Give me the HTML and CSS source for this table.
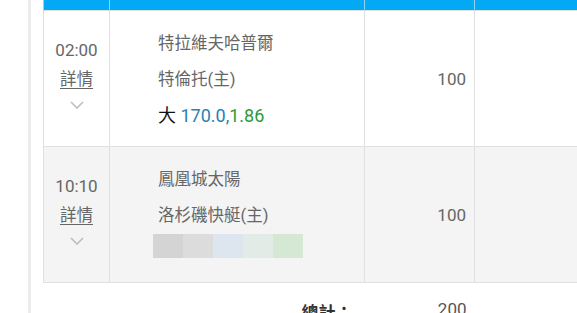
FILE: index.html
```html
<!DOCTYPE html>
<html lang="zh-Hant">
<head>
<meta charset="utf-8">
<title>注單</title>
<link rel="stylesheet" href="styles.css">
</head>
<body>
<div class="page">
  <div class="rail"></div>
  <table class="bets">
    <colgroup>
      <col class="w-time"><col class="w-match"><col class="w-amt"><col class="w-extra">
    </colgroup>
    <thead>
      <tr><th></th><th></th><th></th><th></th></tr>
    </thead>
    <tbody>
      <tr class="row">
        <td class="time">
          <div class="clock">02:00</div>
          <a class="detail" href="#">詳情</a>
          <svg class="chev" width="14" height="8" viewBox="0 0 14 8"><path d="M1 1 L7 7 L13 1" fill="none" stroke="#bdbdbd" stroke-width="1.6"/></svg>
        </td>
        <td class="match">
          <div class="line">特拉維夫哈普爾</div>
          <div class="line">特倫托(主)</div>
          <div class="line pick"><span class="dir">大</span> <span class="hdp">170.0,</span><span class="odds">1.86</span></div>
        </td>
        <td class="amt">100</td>
        <td></td>
      </tr>
      <tr class="row alt">
        <td class="time">
          <div class="clock">10:10</div>
          <a class="detail" href="#">詳情</a>
          <svg class="chev" width="14" height="8" viewBox="0 0 14 8"><path d="M1 1 L7 7 L13 1" fill="none" stroke="#bdbdbd" stroke-width="1.6"/></svg>
        </td>
        <td class="match">
          <div class="line">鳳凰城太陽</div>
          <div class="line">洛杉磯快艇(主)</div>
          <div class="line"><span class="blur"><span class="b1"></span><span class="b2"></span><span class="b3"></span><span class="b4"></span><span class="b5"></span></span></div>
        </td>
        <td class="amt">100</td>
        <td></td>
      </tr>
      <tr class="total">
        <td></td>
        <td class="label">總計：</td>
        <td class="sum">200</td>
        <td></td>
      </tr>
    </tbody>
  </table>
</div>
</body>
</html>
```

FILE: styles.css
```css
html, body {
  margin: 0;
  padding: 0;
  background: #fff;
  overflow: hidden;
}
body {
  font-family: Roboto, "Noto Sans CJK TC", sans-serif;
  font-size: 16.5px;
  color: #666;
}
.page {
  display: flex;
  padding-left: 28px;
}
.rail {
  flex: none;
  width: 3px;
  height: 313px;
  background: #ececec;
  margin-right: 12px;
}
.bets {
  flex: none;
  border-collapse: collapse;
  table-layout: fixed;
  width: 560px;
}
.w-time { width: 66px; }
.w-match { width: 255px; }
.w-amt { width: 110px; }
.w-extra { width: 129px; }
.bets th {
  height: 10px;
  padding: 0;
  background: #03a9f4;
  border-left: 1px solid #8fd4f8;
  border-right: 1px solid #8fd4f8;
}
.bets td {
  border: 1px solid #e0e0e0;
  padding: 0;
}
.alt td { background: #f4f4f4; }
.time {
  vertical-align: top;
  text-align: center;
  padding-top: 24px !important;
}
.clock {
  line-height: 30px;
  font-size: 17px;
}
.detail {
  display: block;
  line-height: 30px;
  color: #666;
  text-decoration: underline;
  text-underline-offset: 3px;
}
.chev {
  display: block;
  margin: 6px auto 0;
}
.match {
  vertical-align: top;
  padding: 15px 0 12px 48px !important;
}
.line {
  line-height: 36px;
  height: 36px;
  white-space: nowrap;
}
.pick { font-size: 18px; }
.dir { color: #111; }
.hdp { color: #2a80b0; }
.odds { color: #2e9a36; }
.blur {
  display: inline-flex;
  vertical-align: top;
  margin-left: -5px;
  height: 24px;
}
.blur span { width: 30px; height: 24px; }
.b1 { background: #d4d4d4; }
.b2 { background: #dcdcdc; }
.b3 { background: #dde5ee; }
.b4 { background: #e3ebe7; }
.b5 { background: #d5e8d3; }
.amt {
  font-size: 17px;
  text-align: right;
  vertical-align: middle;
  padding-right: 8px !important;
}
.total td {
  border-left: none;
  border-right: none;
  height: 40px;
  vertical-align: top;
  padding-top: 16px !important;
  font-size: 17px;
}
.label {
  text-align: right;
  padding-right: 12px !important;
  color: #333;
  font-weight: 700;
}
.sum {
  text-align: right;
  padding-right: 8px !important;
  color: #555;
}
```
